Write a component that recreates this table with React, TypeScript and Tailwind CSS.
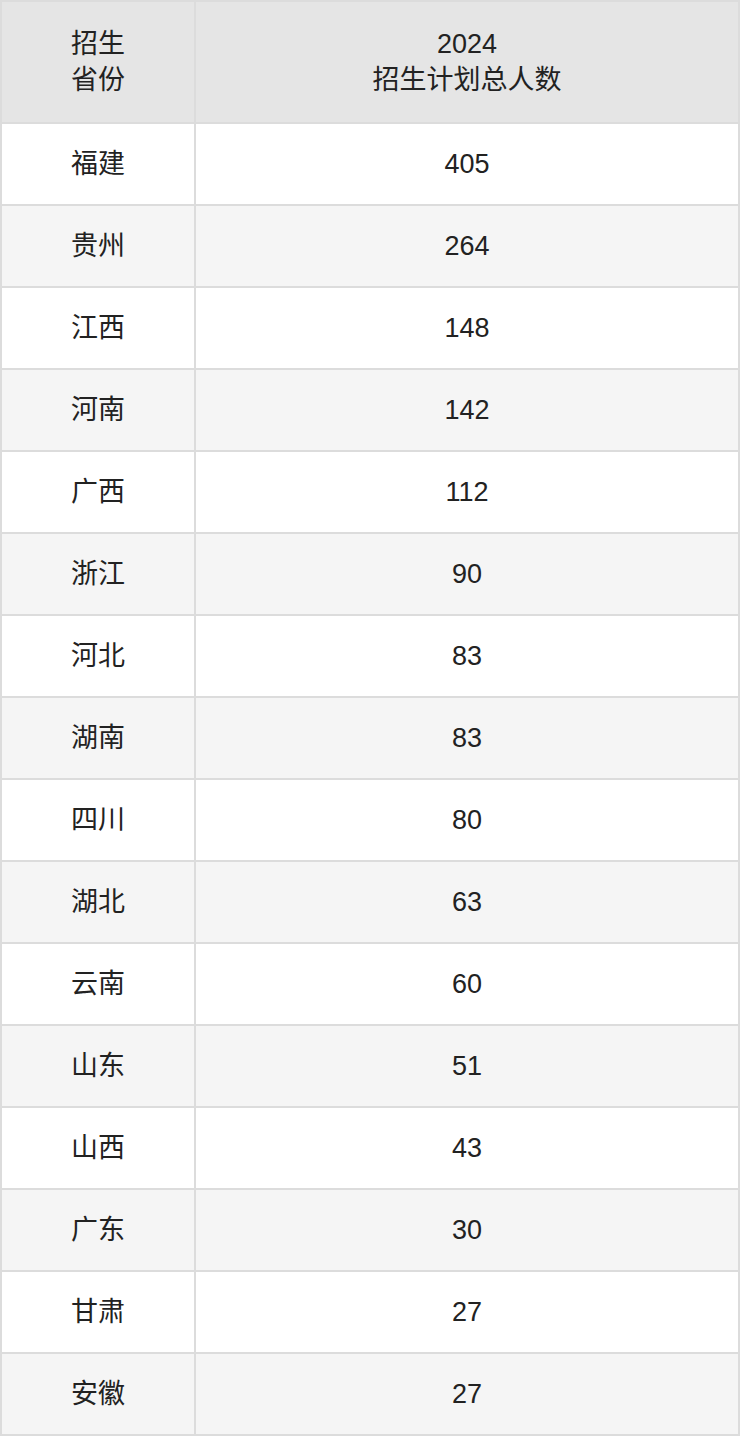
const rows: [string, number][] = [
  ["福建", 405],
  ["贵州", 264],
  ["江西", 148],
  ["河南", 142],
  ["广西", 112],
  ["浙江", 90],
  ["河北", 83],
  ["湖南", 83],
  ["四川", 80],
  ["湖北", 63],
  ["云南", 60],
  ["山东", 51],
  ["山西", 43],
  ["广东", 30],
  ["甘肃", 27],
  ["安徽", 27],
];

export default function App() {
  return (
    <div
      className="w-[740px] bg-white text-[#222] text-[27px]"
      style={{ fontFamily: '"Liberation Sans", "Noto Sans CJK SC", sans-serif' }}
    >
      <div className="grid grid-cols-[192px_1fr] gap-[2px] p-[2px] bg-[#dcdcdc]">
        <div className="h-[120px] bg-[#e5e5e5] flex flex-col items-center justify-center leading-[36px]">
          <span>招生</span>
          <span>省份</span>
        </div>
        <div className="h-[120px] bg-[#e5e5e5] flex flex-col items-center justify-center leading-[36px]">
          <span>2024</span>
          <span>招生计划总人数</span>
        </div>
        {rows.map(([name, count], i) => {
          const bg = i % 2 === 1 ? "bg-[#f5f5f5]" : "bg-white";
          return [
            <div key={name + "a" + i} className={`h-[80px] ${bg} flex items-center justify-center`}>
              {name}
            </div>,
            <div key={name + "b" + i} className={`h-[80px] ${bg} flex items-center justify-center`}>
              {count}
            </div>,
          ];
        })}
      </div>
    </div>
  );
}
